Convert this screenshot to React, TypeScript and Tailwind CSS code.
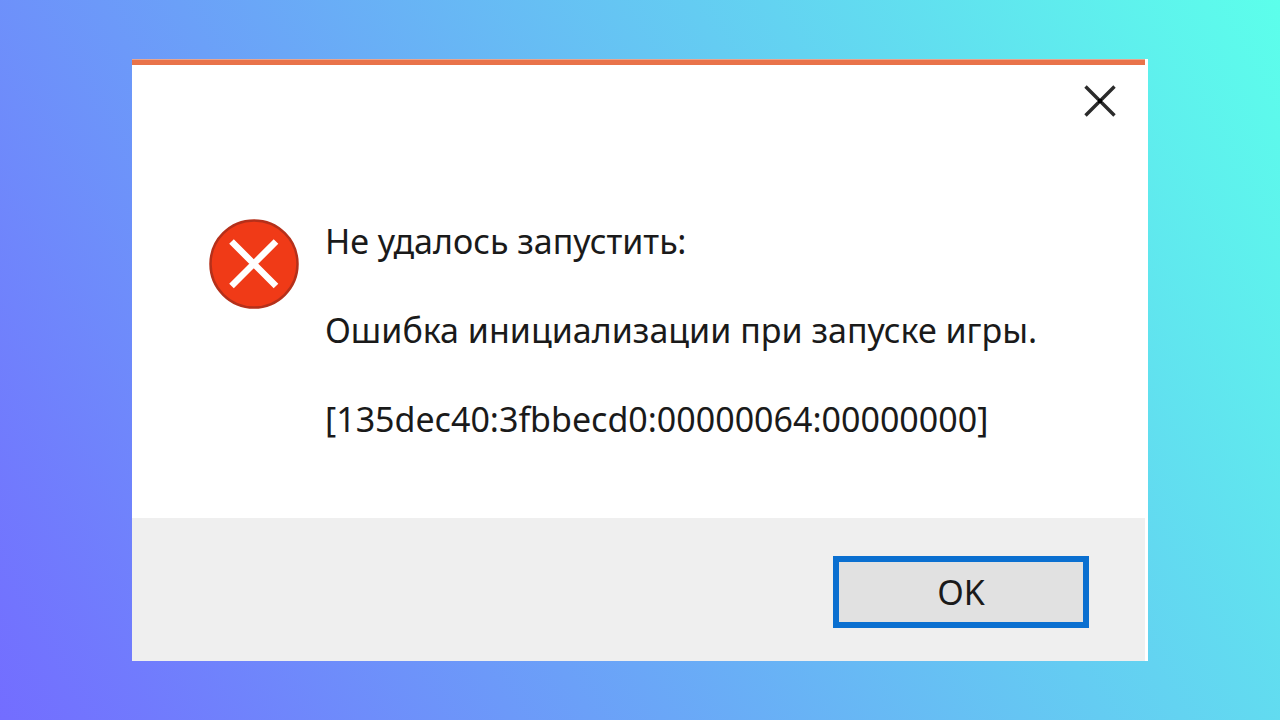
interface ErrorDialogProps {
  lines: string[];
  confirmLabel: string;
}

function CloseIcon() {
  return (
    <svg viewBox="0 0 32 32" className="size-8" aria-hidden="true">
      <path
        d="M1.5 1.5 30.5 30.5M30.5 1.5 1.5 30.5"
        stroke="#2b2b2b"
        strokeWidth="3.4"
        fill="none"
      />
      <rect x="14" y="14" width="4" height="4" fill="#000000" />
    </svg>
  );
}

function ErrorIcon() {
  return (
    <svg
      viewBox="0 0 90 90"
      className="size-[90px] shrink-0"
      role="img"
      aria-label="Ошибка"
    >
      <circle cx="45" cy="45" r="43.5" fill="#f03a17" stroke="#b5301a" strokeWidth="2.5" />
      <path
        d="M22.5 22.5 67 67M67 22.5 22.5 67"
        stroke="#ffffff"
        strokeWidth="6.5"
        fill="none"
      />
    </svg>
  );
}

function ErrorDialog({ lines, confirmLabel }: ErrorDialogProps) {
  return (
    <div
      role="alertdialog"
      aria-describedby="error-text"
      className="w-full bg-white"
    >
      {/* Accent strip stops just short of the right edge, like the footer */}
      <div className="mr-[3px] h-1.5 border-t border-[#e8a58f] bg-[#e9734a]" />

      {/* Title bar has no caption, only the close button */}
      <div className="flex justify-end px-8 pt-5">
        <button type="button" aria-label="Закрыть">
          <CloseIcon />
        </button>
      </div>

      <div className="flex items-start gap-[26px] pt-[102px] pr-8 pb-[77px] pl-[77px]">
        <ErrorIcon />
        <div id="error-text" className="flex flex-col gap-[45px]">
          {lines.map((line) => (
            <p key={line}>{line}</p>
          ))}
        </div>
      </div>

      <div className="mr-[3px] flex justify-end bg-[#efefef] px-14 pt-[38px] pb-[33px]">
        <button
          type="button"
          className="h-[72px] w-64 border-6 border-[#0a6fd0] bg-[#e1e1e1]"
        >
          {confirmLabel}
        </button>
      </div>
    </div>
  );
}

export default function App() {
  return (
    <main className="flex min-h-screen items-center bg-[linear-gradient(60deg,#736dff,#5cffeb)] px-[132px] font-['Noto_Sans',sans-serif] text-[34px] leading-[44px] text-[#1a1a1a]">
      <ErrorDialog
        lines={[
          'Не удалось запустить:',
          'Ошибка инициализации при запуске игры.',
          '[135dec40:3fbbecd0:00000064:00000000]',
        ]}
        confirmLabel="OK"
      />
    </main>
  );
}
